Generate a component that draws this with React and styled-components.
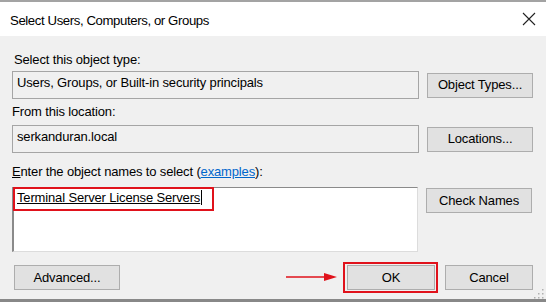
import styled, { createGlobalStyle } from "styled-components";

const GlobalStyle = createGlobalStyle`
  html, body {
    margin: 0;
    padding: 0;
    background: #f0f0f0;
  }
  * {
    box-sizing: border-box;
  }
`;

const StyledWindow = styled.div`
  position: relative;
  display: flex;
  flex-direction: column;
  width: 546px;
  height: 302px;
  background: #f0f0f0;
  border-top: 2px solid #a3a3a3;
  border-bottom: 3px solid #888888;
  font-family: "Liberation Sans", Arial, sans-serif;
  font-size: 13px;
  letter-spacing: -0.15px;
  line-height: 16px;
  color: #000;
  overflow: hidden;
`;

const StyledTitleBar = styled.div`
  display: flex;
  align-items: center;
  justify-content: space-between;
  height: 34px;
  padding: 3px 10px 0 10px;
  background: #fff;
  font-size: 13.2px;
  letter-spacing: -0.4px;
`;

const StyledClose = styled.svg`
  width: 14px;
  height: 14px;
  margin-top: -3px;
`;

const StyledBody = styled.div`
  display: flex;
  flex-direction: column;
  flex: 1;
  padding: 16px 13px 0 12px;
`;

const StyledLabel = styled.div`
  margin-top: ${(p) => p.$top || 0}px;
  margin-bottom: ${(p) => p.$bottom || 3}px;
  padding-left: ${(p) => p.$indent || 0}px;
  height: 16px;
  white-space: nowrap;
`;

const StyledKey = styled.span`
  text-decoration: underline;
`;

const StyledLink = styled.span`
  color: #0066cc;
  text-decoration: underline;
`;

const StyledRow = styled.div`
  display: flex;
  align-items: ${(p) => (p.$top ? "flex-start" : "center")};
  gap: 8px;
`;

const StyledField = styled.div`
  width: 407px;
  height: 28px;
  padding: 3px 4px 0 4px;
  border: 1px solid #a5a5a5;
  background: #f0f0f0;
  white-space: nowrap;
`;

const StyledTextArea = styled.div`
  width: 406px;
  height: 65px;
  background: #fff;
  border-top: 1px solid #8a8a8a;
  border-left: 2px solid #8a8a8a;
  border-right: 1px solid #dcdcdc;
  border-bottom: 1px solid #dcdcdc;
`;

const StyledMarked = styled.span`
  display: inline-flex;
  align-items: flex-start;
  margin: -1px 0 0 -1px;
  padding: 1px 10px 3px 2px;
  border: 2px solid #e0121b;
  white-space: nowrap;
`;

const StyledResolved = styled.span`
  text-decoration: underline;
`;

const StyledCaret = styled.span`
  display: inline-block;
  width: 1px;
  height: 15px;
  margin-left: 1px;
  background: #000;
`;

const StyledButton = styled.div`
  display: flex;
  align-items: center;
  justify-content: center;
  flex-shrink: 0;
  width: ${(p) => p.$width || 106}px;
  height: 25px;
  margin-top: ${(p) => p.$offset || 0}px;
  background: #e1e1e1;
  border: 1px solid #adadad;
  white-space: nowrap;
`;

const StyledFooter = styled.div`
  display: flex;
  align-items: center;
  margin-top: 13px;
  padding-left: 2px;
`;

const StyledSpacer = styled.div`
  flex: 1;
`;

const StyledArrow = styled.svg`
  width: 52px;
  height: 10px;
  margin-right: 9px;
  margin-top: -2px;
`;

const StyledOkFrame = styled.div`
  display: flex;
  margin: -3px 7px -3px -4px;
  padding: 1px 1px 1px 2px;
  border: 2px solid #e0121b;
`;

const StyledGrip = styled.svg`
  position: absolute;
  right: 2px;
  bottom: 0;
  width: 11px;
  height: 11px;
`;

const gripDots = [
  [9, 1],
  [9, 5],
  [5, 5],
  [9, 9],
  [5, 9],
  [1, 9],
];

const App = () => {
  return (
    <>
      <GlobalStyle />
      <StyledWindow>
        <StyledTitleBar>
          <span>Select Users, Computers, or Groups</span>
          <StyledClose viewBox="0 0 14 14">
            <path d="M1 1 L13 13 M13 1 L1 13" stroke="#222" strokeWidth="1.1" fill="none" />
          </StyledClose>
        </StyledTitleBar>
        <StyledBody>
          <StyledLabel $indent={2}>Select this object type:</StyledLabel>
          <StyledRow>
            <StyledField>Users, Groups, or Built-in security principals</StyledField>
            <StyledButton>Object Types...</StyledButton>
          </StyledRow>

          <StyledLabel $top={5} $bottom={5}>From this location:</StyledLabel>
          <StyledRow>
            <StyledField>serkanduran.local</StyledField>
            <StyledButton>Locations...</StyledButton>
          </StyledRow>

          <StyledLabel $top={11} $bottom={7}>
            <StyledKey>E</StyledKey>nter the object names to select (<StyledLink>examples</StyledLink>):
          </StyledLabel>
          <StyledRow $top>
            <StyledTextArea>
              <StyledMarked>
                <StyledResolved>Terminal Server License Servers</StyledResolved>
                <StyledCaret />
              </StyledMarked>
            </StyledTextArea>
            <StyledButton $offset={1}>Check Names</StyledButton>
          </StyledRow>

          <StyledFooter>
            <StyledButton>Advanced...</StyledButton>
            <StyledSpacer />
            <StyledArrow viewBox="0 0 52 10">
              <line x1="0" y1="5" x2="42" y2="5" stroke="#e0121b" strokeWidth="1.4" />
              <polygon points="38,1 51,5 38,9" fill="#e0121b" />
            </StyledArrow>
            <StyledOkFrame>
              <StyledButton $width={88}>OK</StyledButton>
            </StyledOkFrame>
            <StyledButton $width={88}>Cancel</StyledButton>
          </StyledFooter>
        </StyledBody>
        <StyledGrip viewBox="0 0 11 11">
          {gripDots.map(([x, y]) => (
            <rect key={`${x}-${y}`} x={x} y={y} width="1.5" height="1.5" fill="#b0b0b0" />
          ))}
        </StyledGrip>
      </StyledWindow>
    </>
  );
};

export default App;
